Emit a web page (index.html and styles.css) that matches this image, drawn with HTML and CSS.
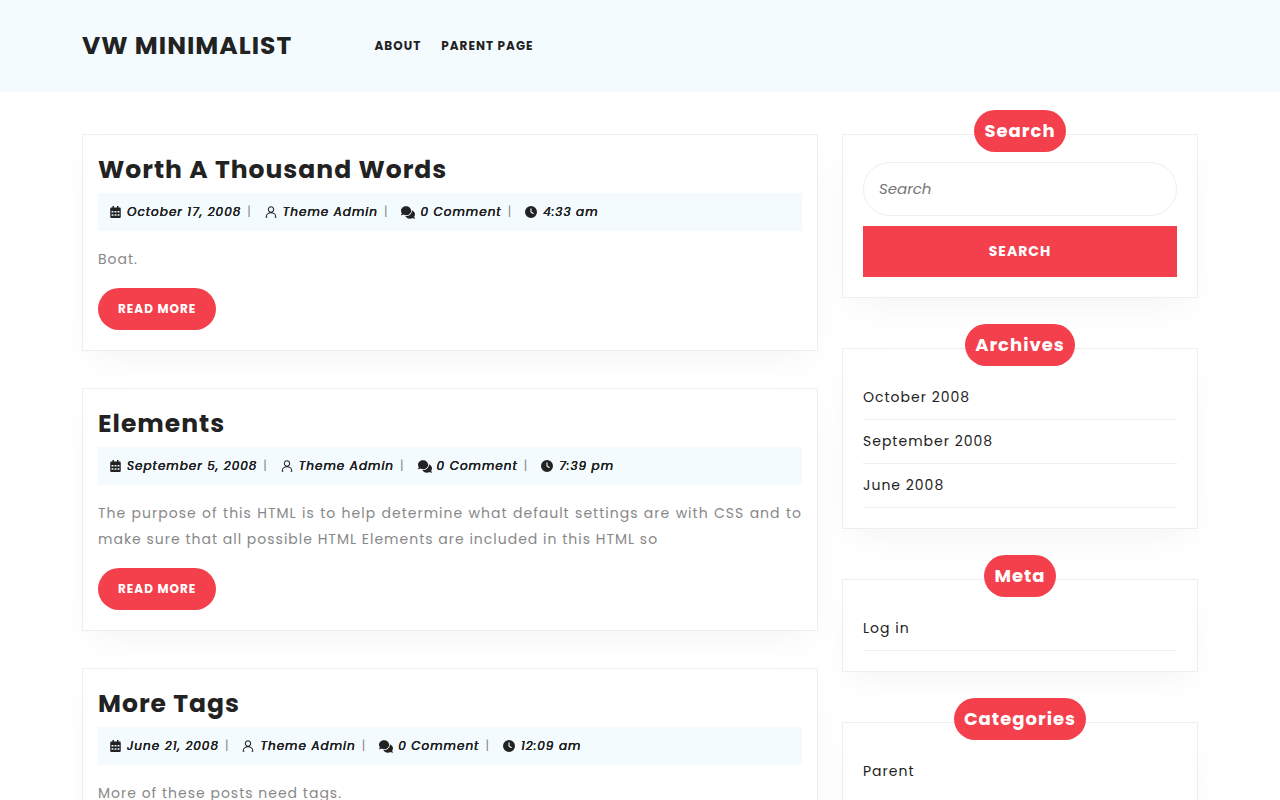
FILE: index.html
```html
<!DOCTYPE html>
<html lang="en">
<head>
  <meta charset="UTF-8">
  <meta name="viewport" content="width=device-width, initial-scale=1">
  <title>VW Minimalist</title>
  <link rel="stylesheet" href="styles.css">
</head>
<body>

  <svg class="sprite" aria-hidden="true">
    <symbol id="calendar" viewBox="0 0 448 512">
      <path fill-rule="evenodd" d="M96 0h64v64h128V0h64v64h48q48 0 48 48v352q0 48-48 48H48q-48 0-48-48V112q0-48 48-48h48zM56 210v64h80v-64zm128 0v64h80v-64zm128 0v64h80v-64zM56 350v64h80v-64zm128 0v64h80v-64zm128 0v64h80v-64z"/>
    </symbol>
    <symbol id="user" viewBox="0 0 12 13">
      <path fill="none" stroke="currentColor" stroke-width="1.1" d="M6 .9a2.9 2.9 0 1 1 0 5.8a2.9 2.9 0 1 1 0-5.8zM.8 12.5v-.6a5.2 4.6 0 0 1 10.4 0v.6M.4 12.3h1.6M10 12.3h1.6"/>
    </symbol>
    <symbol id="comments" viewBox="0 24 576 464" preserveAspectRatio="none">
      <path d="M416 192c0-88.4-93.1-160-208-160S0 103.6 0 192c0 34.3 14.1 65.9 38 92-13.4 30.2-35.5 54.2-35.8 54.5-2.2 2.3-2.8 5.7-1.5 8.7S4.8 352 8 352c36.6 0 66.9-12.3 88.7-25 32.2 15.7 70.3 25 111.3 25 114.9 0 208-71.6 208-160zm122 220c23.9-26 38-57.7 38-92 0-66.9-53.5-124.2-129.3-148.1.9 6.6 1.3 13.3 1.3 20.1 0 105.9-107.7 192-240 192-10.8 0-21.3-.8-31.7-1.9C207.8 439.6 281.8 480 368 480c41 0 79.1-9.2 111.3-25 21.8 12.7 52.1 25 88.7 25 3.2 0 6.1-1.9 7.3-4.8 1.3-2.9.7-6.3-1.5-8.7-.3-.3-22.4-24.2-35.8-54.5z"/>
    </symbol>
    <symbol id="clock" viewBox="0 0 512 512">
      <path fill-rule="evenodd" d="M256 0a256 256 0 1 1 0 512A256 256 0 1 1 256 0zM232 120V256c0 8 4 15.5 10.7 20l96 64c11 7.4 25.9 4.4 33.3-6.7s4.4-25.9-6.7-33.3L280 243.2V120c0-13.3-10.7-24-24-24s-24 10.7-24 24z"/>
    </symbol>
  </svg>

  <header class="site-header">
    <div class="container header-row">
      <div class="logo"><a href="#">VW MINIMALIST</a></div>
      <nav class="main-nav">
        <a href="#">ABOUT</a>
        <a href="#">PARENT PAGE</a>
      </nav>
    </div>
  </header>

  <div class="container content-row">
    <main class="posts">
      <article class="post">
        <h2><a href="#">Worth A Thousand Words</a></h2>
        <div class="post-meta">
          <svg class="icon icon-calendar"><use href="#calendar"/></svg><a href="#">October 17, 2008</a><span class="sep">|</span>
          <svg class="icon icon-user"><use href="#user"/></svg><a href="#">Theme Admin</a><span class="sep">|</span>
          <svg class="icon icon-comments"><use href="#comments"/></svg><span>0 Comment</span><span class="sep">|</span>
          <svg class="icon icon-clock"><use href="#clock"/></svg><span>4:33 am</span>
        </div>
        <p>Boat.</p>
        <a class="read-more" href="#">READ MORE</a>
      </article>

      <article class="post">
        <h2><a href="#">Elements</a></h2>
        <div class="post-meta">
          <svg class="icon icon-calendar"><use href="#calendar"/></svg><a href="#">September 5, 2008</a><span class="sep">|</span>
          <svg class="icon icon-user"><use href="#user"/></svg><a href="#">Theme Admin</a><span class="sep">|</span>
          <svg class="icon icon-comments"><use href="#comments"/></svg><span>0 Comment</span><span class="sep">|</span>
          <svg class="icon icon-clock"><use href="#clock"/></svg><span>7:39 pm</span>
        </div>
        <p>The purpose of this HTML is to help determine what default settings are with CSS and to make sure that all possible HTML Elements are included in this HTML so</p>
        <a class="read-more" href="#">READ MORE</a>
      </article>

      <article class="post">
        <h2><a href="#">More Tags</a></h2>
        <div class="post-meta">
          <svg class="icon icon-calendar"><use href="#calendar"/></svg><a href="#">June 21, 2008</a><span class="sep">|</span>
          <svg class="icon icon-user"><use href="#user"/></svg><a href="#">Theme Admin</a><span class="sep">|</span>
          <svg class="icon icon-comments"><use href="#comments"/></svg><span>0 Comment</span><span class="sep">|</span>
          <svg class="icon icon-clock"><use href="#clock"/></svg><span>12:09 am</span>
        </div>
        <p>More of these posts need tags.</p>
        <a class="read-more" href="#">READ MORE</a>
      </article>
    </main>

    <aside class="sidebar">
      <section class="widget">
        <h3>Search</h3>
        <form class="search-form">
          <input type="search" placeholder="Search" aria-label="Search">
          <button type="submit">SEARCH</button>
        </form>
      </section>

      <section class="widget">
        <h3>Archives</h3>
        <ul>
          <li><a href="#">October 2008</a></li>
          <li><a href="#">September 2008</a></li>
          <li><a href="#">June 2008</a></li>
        </ul>
      </section>

      <section class="widget">
        <h3>Meta</h3>
        <ul>
          <li><a href="#">Log in</a></li>
        </ul>
      </section>

      <section class="widget">
        <h3>Categories</h3>
        <ul>
          <li class="last"><a href="#">Parent</a></li>
        </ul>
      </section>
    </aside>
  </div>

</body>
</html>
```
FILE: styles.css
```css
* {
  box-sizing: border-box;
}

body {
  margin: 0;
  font-family: Poppins, Inter, sans-serif;
  font-size: 14px;
  letter-spacing: 1px;
  color: #888;
  background: #fff;
}

a {
  color: #222;
  text-decoration: none;
}

h2, h3, p, ul {
  margin: 0;
  padding: 0;
}

.sprite {
  display: none;
}

.container {
  max-width: 1140px;
  margin: 0 auto;
  padding: 0 12px;
}

.site-header {
  background: #f3fbff;
}

.header-row {
  display: grid;
  grid-template-columns: 1fr 3fr;
  gap: 18px;
  align-items: center;
  padding-top: 26px;
  padding-bottom: 26px;
}

.logo {
  font-size: 25px;
  font-weight: 700;
  line-height: 40px;
  white-space: nowrap;
}

.main-nav {
  display: flex;
  gap: 20px;
  font-size: 12px;
  font-weight: 700;
}

.content-row {
  display: grid;
  grid-template-columns: minmax(0, 736fr) minmax(0, 356fr);
  gap: 24px;
  align-items: start;
  padding-top: 42px;
}

.post,
.widget {
  border: 1px solid #eee;
  background: #fff;
  box-shadow: 0 15px 36px -10px rgba(0, 0, 0, 0.05);
}

.post {
  padding: 20px 15px;
  margin-bottom: 37px;
}

.post h2 {
  font-size: 25px;
  font-weight: 700;
  line-height: 30px;
  margin-bottom: 8px;
}

.post-meta {
  display: flex;
  flex-wrap: wrap;
  align-items: center;
  background: #f3fbff;
  color: #222;
  padding: 0 12px;
  margin-bottom: 15px;
  font-size: 12px;
  font-style: italic;
  line-height: 38px;
  text-shadow: 0 0 0 #222, 0 0 0 #222;
}

.icon {
  fill: currentColor;
  height: 12px;
  margin-right: 6px;
}

.icon-calendar {
  width: 11px;
}

.icon-user {
  width: 12px;
}

.icon-comments {
  width: 14px;
  height: 13px;
  margin-right: 5px;
}

.icon-clock {
  width: 12px;
}

.sep {
  color: #888;
  font-style: normal;
  text-shadow: none;
  margin: 0 13px 0 6px;
}

.post p {
  line-height: 26px;
  text-align: justify;
  margin-bottom: 16px;
}

.read-more {
  display: inline-block;
  vertical-align: top;
  padding: 0 20px;
  border-radius: 25px;
  background: #f43f4c;
  color: #fff;
  font-size: 12px;
  font-weight: 700;
  line-height: 42px;
}

.widget {
  padding: 0 20px 20px;
  margin-bottom: 50px;
}

.widget h3 {
  width: fit-content;
  margin: -25px auto 10px;
  padding: 0 10px;
  border-radius: 25px;
  background: #f43f4c;
  color: #fff;
  font-size: 18px;
  font-weight: 700;
  line-height: 42px;
}

.search-form {
  display: grid;
  gap: 10px;
}

.search-form input {
  width: 100%;
  height: 54px;
  padding: 0 15px 2px;
  border: 1px solid #eee;
  border-radius: 30px;
  background: #fff;
  font: italic 15px Poppins, Inter, sans-serif;
  color: #222;
}

.search-form input::placeholder {
  color: #757575;
}

.search-form button {
  height: 51px;
  border: 0;
  background: #f43f4c;
  color: #fff;
  font: 700 14px Poppins, Inter, sans-serif;
  letter-spacing: 1px;
}

.widget ul {
  list-style: none;
}

.widget li {
  border-bottom: 1px solid #eee;
  line-height: 43px;
}

.widget li.last {
  border-bottom: 0;
}
```
